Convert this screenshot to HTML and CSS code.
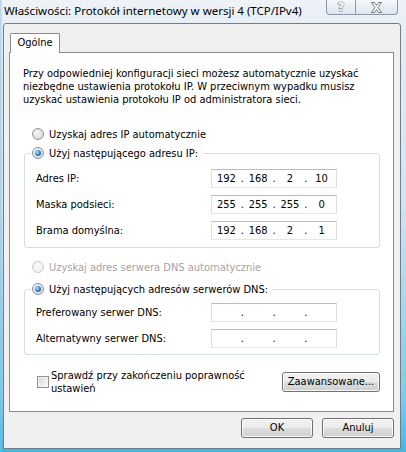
FILE: index.html
```html
<!DOCTYPE html>
<html lang="pl">
<head>
<meta charset="utf-8">
<title>Właściwości: Protokół internetowy w wersji 4 (TCP/IPv4)</title>
<link rel="stylesheet" href="styles.css">
</head>
<body>
<div class="window">
  <div class="titlebar">
    <span class="title">Właściwości: Protokół internetowy w wersji 4 (TCP/IPv4)</span>
    <div class="caption">
      <div class="cap help"><span class="qmark">?</span></div>
      <div class="cap close">
        <svg width="13" height="11" viewBox="0 0 13 11"><path d="M1.5 0.5H4.5L6.5 3.5L8.5 0.5H11.5L8 5.5L11.5 10.5H8.5L6.5 7.5L4.5 10.5H1.5L5 5.5Z" fill="#fff" stroke="#6f7885" stroke-width="1" stroke-linejoin="round"/></svg>
      </div>
    </div>
  </div>
  <div class="client">
    <div class="tabs"><div class="tab">Ogólne</div></div>
    <div class="panel">
      <p class="intro">Przy odpowiedniej konfiguracji sieci możesz automatycznie uzyskać niezbędne ustawienia protokołu IP. W przeciwnym wypadku musisz uzyskać ustawienia protokołu IP od administratora sieci.</p>

      <div class="option first"><span class="radio"></span><span>Uzyskaj adres IP automatycznie</span></div>

      <fieldset class="group ipgroup">
        <legend><span class="radio checked"></span><span>Użyj następującego adresu IP:</span></legend>
        <div class="row"><span>Adres IP:</span><div class="ip"><span>192</span><i>.</i><span>168</span><i>.</i><span>2</span><i>.</i><span>10</span></div></div>
        <div class="row"><span>Maska podsieci:</span><div class="ip"><span>255</span><i>.</i><span>255</span><i>.</i><span>255</span><i>.</i><span>0</span></div></div>
        <div class="row"><span>Brama domyślna:</span><div class="ip"><span>192</span><i>.</i><span>168</span><i>.</i><span>2</span><i>.</i><span>1</span></div></div>
      </fieldset>

      <div class="option disabled dnsauto"><span class="radio"></span><span>Uzyskaj adres serwera DNS automatycznie</span></div>

      <fieldset class="group dnsgroup">
        <legend><span class="radio checked"></span><span>Użyj następujących adresów serwerów DNS:</span></legend>
        <div class="row"><span>Preferowany serwer DNS:</span><div class="ip"><span></span><i>.</i><span></span><i>.</i><span></span><i>.</i><span></span></div></div>
        <div class="row"><span>Alternatywny serwer DNS:</span><div class="ip"><span></span><i>.</i><span></span><i>.</i><span></span><i>.</i><span></span></div></div>
      </fieldset>

      <div class="bottom">
        <div class="check"><span class="checkbox"></span><span class="check-text">Sprawdź przy zakończeniu poprawność ustawień</span></div>
        <div class="button advanced">Zaawansowane...</div>
      </div>
    </div>
    <div class="dialog-buttons">
      <div class="button">OK</div>
      <div class="button">Anuluj</div>
    </div>
  </div>
</div>
</body>
</html>
```

FILE: styles.css
```css
* { box-sizing: border-box; }
html, body { margin: 0; padding: 0; }
body {
  width: 406px;
  height: 452px;
  overflow: hidden;
  font-family: "DejaVu Sans Condensed", "DejaVu Sans", sans-serif;
  font-size: 11px;
  color: #000;
}
.window {
  width: 406px;
  height: 452px;
  display: flex;
  flex-direction: column;
  background:
    linear-gradient(90deg, rgba(120,190,230,0.55) 0px, rgba(255,255,255,0) 3px),
    linear-gradient(180deg, #eef3f8 0px, #e6edf4 30px, #d3e4f0 200px, #7ccbec 400px, #3fb8e6 452px);
}
.titlebar {
  height: 23px;
  flex: none;
  display: flex;
  justify-content: space-between;
  align-items: flex-start;
  padding: 0 8px 0 4px;
}
.title {
  font-family: "Noto Sans", sans-serif;
  font-size: 11.5px;
  line-height: 16px;
  margin-top: 3px;
  white-space: nowrap;
}
.caption { display: flex; }
.cap {
  height: 15px;
  border: 1px solid #8d98a6;
  border-top: none;
  background: linear-gradient(180deg, #f6f8fb 0%, #e9eef4 50%, #dfe6ee 100%);
  display: flex;
  align-items: center;
  justify-content: center;
}
.cap.help { width: 29px; border-right: none; border-radius: 0 0 0 4px; }
.cap.close { width: 43px; border-radius: 0 0 4px 0; }
.qmark {
  font-family: "DejaVu Sans", sans-serif;
  font-weight: bold;
  font-size: 12px;
  line-height: 12px;
  color: #fff;
  -webkit-text-stroke: 1px #6f7885;
  paint-order: stroke fill;
}
.client {
  margin-left: 3px;
  width: 398px;
  height: 426px;
  flex: none;
  background: #f0f0f0;
  border: 1px solid #737d88;
  border-radius: 3px 3px 0 0;
  padding: 9px 6px 0 5px;
  display: flex;
  flex-direction: column;
}
.tabs { display: flex; padding-left: 1px; }
.tab {
  width: 50px;
  height: 20px;
  margin-bottom: -1px;
  background: #fff;
  border: 1px solid #898c95;
  border-bottom: none;
  border-radius: 2px 2px 0 0;
  text-align: center;
  line-height: 18px;
  position: relative;
  z-index: 1;
}
.panel {
  width: 385px;
  height: 360px;
  background: #fff;
  border: 1px solid #898c95;
  padding: 14px 13px 0 13px;
}
.intro { margin: 0; line-height: 13px; }
.option {
  display: flex;
  align-items: center;
  height: 14px;
  padding-left: 9px;
  gap: 5px;
}
.option.first { margin-top: 21px; }
.option.disabled { color: #a3a3a3; }
.option.dnsauto { margin-top: 12px; }
.radio {
  width: 12px;
  height: 12px;
  border-radius: 50%;
  border: 1px solid #8f9499;
  background: radial-gradient(circle at 40% 40%, #f8f8f8 0%, #e6e6e6 45%, #cdcdcd 100%);
  display: inline-flex;
  align-items: center;
  justify-content: center;
  flex: none;
}
.option.disabled .radio {
  border-color: #c9cbcd;
  background: radial-gradient(circle at 40% 40%, #fbfbfb 0%, #f1f1f1 60%, #e4e4e4 100%);
}
.radio.checked::after {
  content: "";
  width: 6px;
  height: 6px;
  border-radius: 50%;
  background: radial-gradient(circle at 35% 35%, #b4e2ff 0%, #3c8fd6 45%, #0f3f78 100%);
}
.group {
  margin: 0 0 0 1px;
  width: 356px;
  border: 1px solid #d5dfe5;
  border-radius: 3px;
  padding: 0;
}
.group legend {
  display: flex;
  align-items: center;
  gap: 5px;
  height: 14px;
  margin-left: 6px;
  padding: 0 5px 0 1px;
}
.ipgroup { margin-top: 5px; padding: 5px 0 4px 0; }
.dnsgroup { margin-top: 8px; padding: 3px 0 3px 0; }
.row {
  display: grid;
  grid-template-columns: 175px 126px;
  align-items: center;
  height: 26px;
  padding-left: 11px;
}
.ip {
  height: 19px;
  border: 1px solid;
  border-color: #b9bcc2 #dadde3 #e3e7ec #dadde3;
  background: #fff;
  display: grid;
  grid-template-columns: 1fr 3px 1fr 3px 1fr 3px 1fr;
  align-items: center;
  text-align: center;
  line-height: 17px;
}
.ip i { font-style: normal; }
.bottom {
  margin-top: 14px;
  display: flex;
  align-items: center;
  justify-content: space-between;
}
.check {
  display: flex;
  align-items: center;
  padding-left: 14px;
  gap: 2px;
  line-height: 13px;
}
.check-text { width: 200px; }
.checkbox {
  width: 12px;
  height: 12px;
  flex: none;
  border: 1px solid #8e8f8f;
  background: linear-gradient(135deg, #d5d5d5 0%, #f0f0f0 70%, #fafafa 100%);
  box-shadow: inset 0 0 0 1px #f4f4f4;
}
.button {
  height: 20px;
  border: 1px solid #707070;
  border-radius: 3px;
  background: linear-gradient(180deg, #f2f2f2 0%, #ebebeb 48%, #dddddd 52%, #cfcfcf 100%);
  box-shadow: inset 0 0 0 1px rgba(255,255,255,0.8);
  display: flex;
  align-items: center;
  justify-content: center;
  line-height: 18px;
}
.advanced { width: 98px; }
.dialog-buttons {
  margin-top: 6px;
  display: flex;
  justify-content: flex-end;
  gap: 9px;
}
.dialog-buttons .button { width: 72px; }
```
